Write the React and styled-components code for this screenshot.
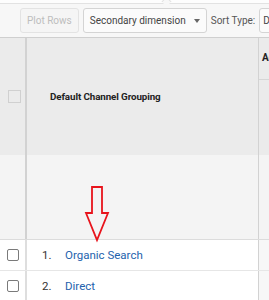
import styled, { createGlobalStyle } from 'styled-components';

const GlobalStyle = createGlobalStyle`
  html, body {
    margin: 0;
    padding: 0;
    background: #ffffff;
  }
  body {
    font-family: Roboto, "Liberation Sans", Arial, sans-serif;
    overflow: hidden;
  }
`;

const Page = styled.div`
  position: relative;
  width: 269px;
  height: 300px;
  overflow: hidden;
  background: #fff;
`;

const TopEdge = styled.div`
  position: relative;
  height: 3px;
  background: #fdfdfd;
  border-bottom: 1px solid #e2e2e2;
`;

const Notch = styled.div`
  position: absolute;
  left: 163px;
  top: -2px;
  width: 6px;
  height: 6px;
  background: #f7f7f7;
  border-left: 1px solid #e2e2e2;
  border-top: 1px solid #e2e2e2;
  transform: rotate(45deg);
`;

const Toolbar = styled.div`
  display: flex;
  align-items: center;
  gap: 4px;
  height: 33px;
  padding-left: 20px;
  background: #f7f7f7;
  border-bottom: 1px solid #cfcfcf;
  white-space: nowrap;
  overflow: hidden;
`;

const ToolButton = styled.div`
  display: flex;
  align-items: center;
  gap: 8px;
  height: 23px;
  padding: 0 ${p => (p.$tight ? '3px' : '6px')};
  border: 1px solid ${p => (p.$disabled ? '#e3e3e3' : '#d4d4d4')};
  border-radius: 3px;
  background: ${p => (p.$disabled ? '#f5f5f5' : '#fbfbfb')};
  color: ${p => (p.$disabled ? '#bdbdbd' : '#444')};
  font-size: 10px;
  flex-shrink: 0;
`;

const Caret = styled.span`
  width: 0;
  height: 0;
  border-left: 3.5px solid transparent;
  border-right: 3.5px solid transparent;
  border-top: 4px solid #666;
`;

const Label = styled.span`
  color: #555;
  font-size: 10px;
  flex-shrink: 0;
`;

const Row = styled.div`
  display: grid;
  grid-template-columns: 27px 232px 1fr;
  height: ${p => p.$h}px;
  background: ${p => p.$bg || '#fff'};
  border-bottom: ${p => (p.$line ? `1px solid ${p.$line}` : 'none')};
`;

const CheckCell = styled.div`
  display: flex;
  align-items: center;
  padding-left: ${p => p.$pad ?? 7}px;
  border-right: 2px solid ${p => p.$line || '#d2d2d2'};
`;

const MainCell = styled.div`
  display: flex;
  align-items: center;
  padding-left: ${p => p.$pad ?? 15}px;
  border-right: 1px solid #d2d2d2;
`;

const SideCell = styled.div`
  background: ${p => p.$bg || 'transparent'};
  overflow: hidden;
`;

const SideHead = styled.div`
  height: 42px;
  border-bottom: 1px solid #d6d6d6;
  padding: 14px 0 0 3px;
  box-sizing: border-box;
  font-weight: 700;
  font-size: 10px;
  color: #222;
  white-space: nowrap;
`;

const Box = styled.span`
  width: ${p => (p.$head ? 11 : 10)}px;
  height: ${p => (p.$head ? 11 : 10)}px;
  border: 1px solid ${p => (p.$head ? '#d0d0d0' : '#7a7a7a')};
  border-radius: ${p => (p.$head ? 0 : 2)}px;
  background: ${p => (p.$head ? '#ebebeb' : '#fff')};
`;

const HeadTitle = styled.span`
  font-weight: 700;
  font-size: 9.8px;
  letter-spacing: -0.1px;
  color: #222;
`;

const Num = styled.span`
  width: 23px;
  font-size: 11.5px;
  color: #333;
`;

const Link = styled.span`
  font-size: 11.5px;
  color: #2462ad;
`;

const Arrow = styled.svg`
  position: absolute;
  left: 84px;
  top: 185px;
`;

export default function App() {
  return (
    <Page>
      <GlobalStyle />
      <TopEdge>
        <Notch />
      </TopEdge>
      <Toolbar>
        <ToolButton $disabled>Plot Rows</ToolButton>
        <ToolButton>
          Secondary dimension <Caret />
        </ToolButton>
        <Label>Sort Type:</Label>
        <ToolButton $tight>Default</ToolButton>
      </Toolbar>

      <Row $h={117} $bg="#ebebeb">
        <CheckCell $pad={8}>
          <Box $head />
        </CheckCell>
        <MainCell $pad={23}>
          <HeadTitle>Default Channel Grouping</HeadTitle>
        </MainCell>
        <SideCell>
          <SideHead>Acquisition</SideHead>
        </SideCell>
      </Row>
      <Row $h={84} $bg="#f4f4f4" $line="#dcdcdc">
        <CheckCell />
        <MainCell />
        <SideCell />
      </Row>
      <Row $h={30} $line="#e6e6e6">
        <CheckCell $line="#dedede">
          <Box />
        </CheckCell>
        <MainCell>
          <Num>1.</Num>
          <Link>Organic Search</Link>
        </MainCell>
        <SideCell $bg="#f7f7f7" />
      </Row>
      <Row $h={30}>
        <CheckCell $line="#dedede">
          <Box />
        </CheckCell>
        <MainCell>
          <Num>2.</Num>
          <Link>Direct</Link>
        </MainCell>
        <SideCell $bg="#f7f7f7" />
      </Row>

      <Arrow width="26" height="58" viewBox="0 0 26 58">
        <path
          d="M8 2 H18 V28 H24 L13 55 L2 28 H8 Z"
          fill="none"
          stroke="#e8141c"
          strokeWidth="1.8"
          strokeLinejoin="miter"
        />
      </Arrow>
    </Page>
  );
}
